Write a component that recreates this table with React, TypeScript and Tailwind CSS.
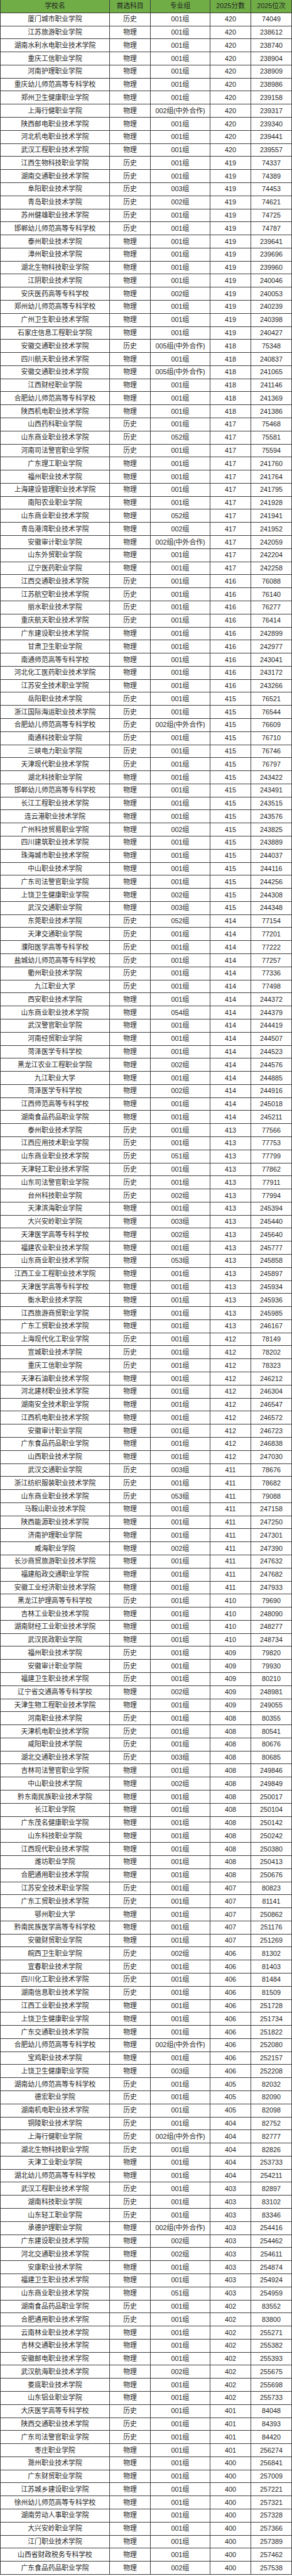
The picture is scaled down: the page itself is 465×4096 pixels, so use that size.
import React from "react";

// name, subject (h = 历史, w = 物理), group, score, rank
const raw = `厦门城市职业学院,h,001组,420,74049
江苏旅游职业学院,w,001组,420,238612
湖南水利水电职业技术学院,w,001组,420,238740
重庆工信职业学院,w,001组,420,238904
河南护理职业学院,w,001组,420,238909
重庆幼儿师范高等专科学校,w,001组,420,238986
郑州卫生健康职业学院,w,001组,420,239158
上海行健职业学院,w,002组(中外合作),420,239317
陕西邮电职业技术学院,w,001组,420,239340
河北机电职业技术学院,w,001组,420,239441
武汉工程职业技术学院,w,001组,420,239557
江西生物科技职业学院,h,001组,419,74337
湖南交通职业技术学院,h,001组,419,74389
阜阳职业技术学院,h,003组,419,74453
青岛职业技术学院,h,002组,419,74621
苏州健雄职业技术学院,h,001组,419,74725
邯郸幼儿师范高等专科学校,h,001组,419,74787
泰州职业技术学院,w,001组,419,239641
漳州职业技术学院,w,001组,419,239696
湖北生物科技职业学院,w,001组,419,239960
江阴职业技术学院,w,001组,419,240046
安庆医药高等专科学校,w,002组,419,240053
郑州幼儿师范高等专科学校,w,001组,419,240239
广州卫生职业技术学院,w,001组,419,240398
石家庄信息工程职业学院,w,001组,419,240427
安徽交通职业技术学院,h,005组(中外合作),418,75348
四川航天职业技术学院,w,001组,418,240837
安徽交通职业技术学院,w,005组(中外合作),418,241065
江西财经职业学院,w,001组,418,241146
合肥幼儿师范高等专科学校,w,001组,418,241369
陕西机电职业技术学院,w,001组,418,241386
山西药科职业学院,h,001组,417,75468
山东商业职业技术学院,h,052组,417,75581
河南司法警官职业学院,h,001组,417,75594
广东理工职业学院,w,001组,417,241760
福州职业技术学院,w,001组,417,241764
上海建设管理职业技术学院,w,001组,417,241795
南阳农业职业学院,w,001组,417,241928
山东商业职业技术学院,w,052组,417,241941
青岛港湾职业技术学院,w,002组,417,241952
安徽审计职业学院,w,002组(中外合作),417,242059
山东外贸职业学院,w,001组,417,242204
辽宁医药职业学院,w,001组,417,242258
江西交通职业技术学院,h,001组,416,76088
江苏航空职业技术学院,h,001组,416,76140
丽水职业技术学院,h,001组,416,76277
重庆航天职业技术学院,h,001组,416,76414
广东建设职业技术学院,w,001组,416,242899
甘肃卫生职业学院,w,001组,416,242977
南通师范高等专科学校,w,001组,416,243041
河北化工医药职业技术学院,w,001组,416,243172
江苏安全技术职业学院,w,001组,416,243266
岳阳职业技术学院,h,001组,415,76521
浙江国际海运职业技术学院,h,001组,415,76544
合肥幼儿师范高等专科学校,h,002组(中外合作),415,76609
南通科技职业学院,h,001组,415,76710
三峡电力职业学院,h,001组,415,76746
天津现代职业技术学院,h,001组,415,76797
湖北科技职业学院,w,001组,415,243422
邯郸幼儿师范高等专科学校,w,001组,415,243491
长江工程职业技术学院,w,001组,415,243515
连云港职业技术学院,w,001组,415,243576
广州科技贸易职业学院,w,002组,415,243825
四川建筑职业技术学院,w,001组,415,243889
珠海城市职业技术学院,w,001组,415,244037
中山职业技术学院,w,001组,415,244116
广东司法警官职业学院,w,001组,415,244256
上饶卫生健康职业学院,w,002组,415,244308
武汉交通职业学院,w,003组,415,244348
东莞职业技术学院,h,052组,414,77154
天津交通职业学院,h,001组,414,77201
濮阳医学高等专科学校,h,001组,414,77222
盐城幼儿师范高等专科学校,h,001组,414,77257
衢州职业技术学院,h,001组,414,77336
九江职业大学,h,001组,414,77498
西安职业技术学院,w,001组,414,244372
山东商业职业技术学院,w,054组,414,244379
武汉警官职业学院,w,001组,414,244419
河南经贸职业学院,w,001组,414,244507
菏泽医学专科学校,w,001组,414,244523
黑龙江农业工程职业学院,w,002组,414,244576
九江职业大学,w,001组,414,244885
菏泽医学专科学校,w,002组,414,244916
江西师范高等专科学校,w,001组,414,245018
湖南食品药品职业学院,w,001组,414,245211
泰州职业技术学院,h,001组,413,77566
江西应用技术职业学院,h,001组,413,77753
山东商业职业技术学院,h,051组,413,77799
天津轻工职业技术学院,h,001组,413,77862
山东司法警官职业学院,h,001组,413,77911
台州科技职业学院,h,002组,413,77994
天津滨海职业学院,w,001组,413,245394
大兴安岭职业学院,w,003组,413,245440
天津医学高等专科学校,w,002组,413,245640
福建农业职业技术学院,w,001组,413,245777
山东商业职业技术学院,w,053组,413,245858
江西工业工程职业技术学院,w,001组,413,245897
天津医学高等专科学校,w,001组,413,245934
衡水职业技术学院,w,001组,413,245936
江西旅游商贸职业学院,w,001组,413,245985
广东工贸职业技术学院,w,001组,413,246167
上海现代化工职业学院,h,001组,412,78149
宣城职业技术学院,h,001组,412,78202
重庆工信职业学院,h,001组,412,78323
天津石油职业技术学院,w,001组,412,246212
河北建材职业技术学院,w,001组,412,246304
湖南安全技术职业学院,w,001组,412,246547
江西机电职业技术学院,w,001组,412,246572
安徽审计职业学院,w,001组,412,246723
广东食品药品职业学院,w,001组,412,246838
山西职业技术学院,w,001组,412,247030
武汉交通职业学院,h,003组,411,78676
浙江纺织服装职业技术学院,h,001组,411,78682
山东商业职业技术学院,h,053组,411,79088
马鞍山职业技术学院,w,001组,411,247158
陕西能源职业技术学院,w,001组,411,247250
济南护理职业学院,w,001组,411,247301
威海职业学院,w,002组,411,247390
长沙商贸旅游职业技术学院,w,001组,411,247632
福建船政交通职业学院,w,001组,411,247682
安徽工业经济职业技术学院,w,001组,411,247933
黑龙江护理高等专科学校,h,001组,410,79690
吉林工业职业技术学院,w,001组,410,248090
湖南财经工业职业技术学院,w,001组,410,248277
武汉民政职业学院,w,001组,410,248734
福州职业技术学院,h,001组,409,79820
安徽审计职业学院,h,001组,409,79930
福建卫生职业技术学院,h,001组,409,80210
辽宁省交通高等专科学校,w,002组,409,248981
天津生物工程职业技术学院,w,001组,409,249055
河南职业技术学院,h,001组,408,80355
天津机电职业技术学院,h,001组,408,80541
咸阳职业技术学院,h,001组,408,80676
湖北交通职业技术学院,h,003组,408,80685
吉林司法警官职业学院,w,001组,408,249846
中山职业技术学院,w,002组,408,249849
黔东南民族职业技术学院,w,001组,408,250017
长江职业学院,w,001组,408,250104
广东茂名健康职业学院,w,001组,408,250142
山东科技职业学院,w,001组,408,250242
江西现代职业技术学院,w,001组,408,250380
潍坊职业学院,w,001组,408,250413
合肥通用职业技术学院,w,001组,408,250676
江苏安全技术职业学院,h,001组,407,80823
广东工贸职业技术学院,h,001组,407,81141
鄂州职业大学,w,001组,407,250862
黔南民族医学高等专科学校,w,001组,407,251176
安徽财贸职业学院,w,001组,407,251269
皖西卫生职业学院,h,002组,406,81302
宜春职业技术学院,h,001组,406,81403
四川化工职业技术学院,h,001组,406,81484
湖南信息职业技术学院,h,001组,406,81509
江西工业职业技术学院,w,001组,406,251728
上饶卫生健康职业学院,w,001组,406,251734
广东交通职业技术学院,w,001组,406,251822
合肥幼儿师范高等专科学校,w,002组(中外合作),406,252080
宝鸡职业技术学院,w,001组,406,252157
上饶卫生健康职业学院,w,003组,406,252208
湖南幼儿师范高等专科学校,h,001组,405,82032
德宏职业学院,h,001组,405,82090
湖南机电职业技术学院,h,001组,405,82098
铜陵职业技术学院,h,001组,404,82752
上海行健职业学院,h,002组(中外合作),404,82777
湖北生物科技职业学院,h,001组,404,82826
天津工业职业学院,w,001组,404,253733
湖北幼儿师范高等专科学校,w,001组,404,254211
武汉工程职业技术学院,h,001组,403,82897
湖南科技职业学院,h,001组,403,83102
山东轻工职业学院,h,001组,403,83346
承德护理职业学院,w,002组(中外合作),403,254416
广东建设职业技术学院,w,002组,403,254462
河北交通职业技术学院,w,002组,403,254611
安康职业技术学院,w,001组,403,254874
福建卫生职业技术学院,w,001组,403,254924
山东商业职业技术学院,w,051组,403,254959
湖南食品药品职业学院,h,001组,402,83552
合肥通用职业技术学院,h,001组,402,83800
云南林业职业技术学院,w,001组,402,255271
吉林交通职业技术学院,w,001组,402,255382
安徽邮电职业技术学院,w,001组,402,255393
武汉航海职业技术学院,w,002组,402,255675
娄底职业技术学院,w,001组,402,255698
山东铝业职业学院,w,001组,402,255733
大庆医学高等专科学校,h,001组,401,84048
陕西交通职业技术学院,h,001组,401,84393
广东司法警官职业学院,h,001组,401,84420
枣庄职业学院,w,001组,401,256274
滁州职业技术学院,w,001组,400,256841
广东财贸职业学院,w,001组,400,257009
江苏城乡建设职业学院,w,001组,400,257221
徐州幼儿师范高等专科学校,w,001组,400,257321
湖南劳动人事职业学院,w,001组,400,257328
大兴安岭职业学院,w,001组,400,257366
江门职业技术学院,w,001组,400,257389
山西省财政税务专科学校,w,001组,400,257462
广东食品药品职业学院,w,002组,400,257538`;

const rows = raw.split("\n").map((line) => {
  const [name, s, group, score, rank] = line.split(",");
  return [name, s === "h" ? "历史" : "物理", group, score, rank];
});

const headers = ["学校名", "首选科目", "专业组", "2025分数", "2025位次"];

function Row({ cells, head }: { cells: string[]; head?: boolean }) {
  return (
    <div
      className={
        "grid grid-cols-[175px_65px_95px_65px_65px] h-[20.79px] border-b border-[#3c3c3c] " +
        (head ? "bg-[#70ad47]" : "bg-white")
      }
    >
      {cells.map((c, i) => (
        <div
          key={i}
          className="flex items-center justify-center border-r border-[#3c3c3c] first:border-l whitespace-nowrap overflow-hidden leading-none"
        >
          {c}
        </div>
      ))}
    </div>
  );
}

export default function App() {
  return (
    <div className="w-[465px] bg-white text-[#1f1f1f] text-[10.8px] font-['Liberation_Sans','Noto_Sans_CJK_SC',sans-serif]">
      <Row cells={headers} head />
      {rows.map((r, i) => (
        <Row key={i} cells={r} />
      ))}
    </div>
  );
}
